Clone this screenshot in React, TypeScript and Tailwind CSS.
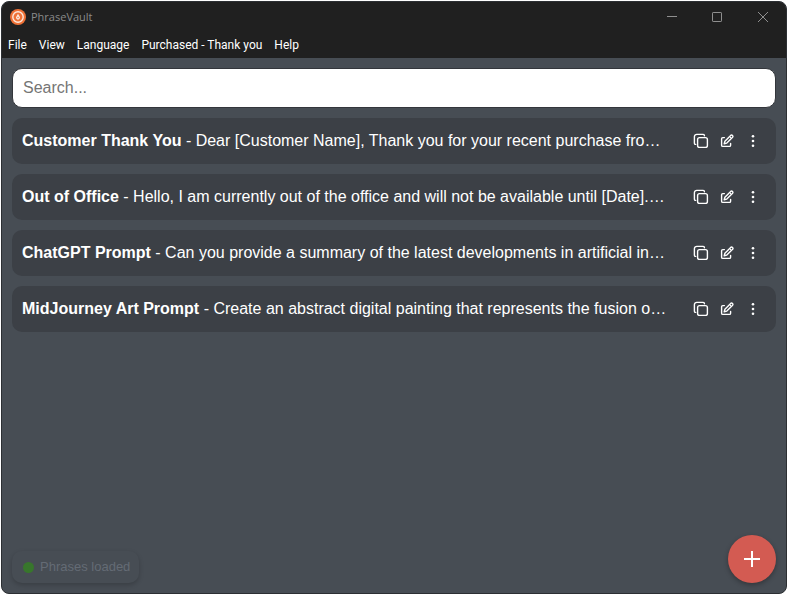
import { useState } from 'react';

interface Phrase {
  id: number;
  title: string;
  body: string;
}

const MENU_ITEMS = ['File', 'View', 'Language', 'Purchased - Thank you', 'Help'];

const PHRASES: Phrase[] = [
  { id: 1, title: 'Customer Thank You', body: 'Dear [Customer Name], Thank you for your recent purchase fro…' },
  { id: 2, title: 'Out of Office', body: 'Hello, I am currently out of the office and will not be available until [Date].…' },
  { id: 3, title: 'ChatGPT Prompt', body: 'Can you provide a summary of the latest developments in artificial in…' },
  { id: 4, title: 'MidJourney Art Prompt', body: 'Create an abstract digital painting that represents the fusion o…' },
];

const AppLogo = () => (
  <svg viewBox="0 0 16 16" className="size-4" aria-hidden="true">
    <circle cx="8" cy="8" r="8" fill="#ef7136" />
    <circle cx="8" cy="8" r="5.2" fill="none" stroke="#fbe9df" strokeWidth="1.4" />
    <path d="M8 4.8 9.5 7.2a2 2 0 1 1-3 0Z" fill="#fbe9df" />
    <circle cx="8" cy="8.5" r="0.7" fill="#ef7136" />
  </svg>
);

const CopyIcon = () => (
  <svg viewBox="0 0 16 16" className="size-4" fill="none" stroke="currentColor" aria-hidden="true">
    <rect x="4.6" y="4.6" width="9.8" height="9.8" rx="2" strokeWidth="1.4" />
    <path d="M11.4 2.7v-.1a1.2 1.2 0 0 0-1.2-1.2H3.8a2.4 2.4 0 0 0-2.4 2.4v6.4a1.2 1.2 0 0 0 1.2 1.2h.1" strokeWidth="1.4" strokeLinecap="round" />
  </svg>
);

const EditIcon = () => (
  <svg viewBox="0 0 16 16" className="size-4" fill="none" stroke="currentColor" strokeLinecap="round" strokeLinejoin="round" aria-hidden="true">
    <path d="M5.4 4.6H3.8A1.2 1.2 0 0 0 2.6 5.8v6.4a1.2 1.2 0 0 0 1.2 1.2h6.6a1.2 1.2 0 0 0 1.2-1.2v-1.8" strokeWidth="1.4" />
    <path d="m5.2 10.8.7-2.6 5.8-5.8a1.35 1.35 0 0 1 1.9 1.9l-5.8 5.8Z" strokeWidth="1.4" />
    <path d="m10.6 3.6 1.8 1.8" strokeWidth="1" />
  </svg>
);

const MoreIcon = () => (
  <svg viewBox="0 0 16 16" className="size-4" fill="currentColor" aria-hidden="true">
    <circle cx="8" cy="3.2" r="1.3" />
    <circle cx="8" cy="8" r="1.3" />
    <circle cx="8" cy="12.8" r="1.3" />
  </svg>
);

const TitleBar = () => (
  <header className="bg-[#202020] font-['Open_Sans','Noto_Sans',sans-serif]">
    <div className="flex h-[30px] items-center justify-between">
      <div className="flex items-center gap-[5px] pl-2 text-[11px] text-[#8a8a8a]">
        <AppLogo />
        <span>PhraseVault</span>
      </div>
      <div className="flex text-[#8f8f8f]">
        <button type="button" aria-label="Minimize" className="flex h-7 w-[45px] items-center justify-center">
          <svg viewBox="0 0 10 10" className="size-[10px]" stroke="currentColor"><path d="M0 4.5h10" /></svg>
        </button>
        <button type="button" aria-label="Maximize" className="flex h-7 w-[45px] items-center justify-center">
          <svg viewBox="0 0 10 10" className="size-[10px]" fill="none" stroke="currentColor"><rect x=".5" y=".5" width="9" height="9" rx=".6" /></svg>
        </button>
        <button type="button" aria-label="Close" className="flex h-7 w-[47px] items-center justify-center">
          <svg viewBox="0 0 10 10" className="size-[10px]" stroke="currentColor"><path d="m0 0 10 10M10 0 0 10" /></svg>
        </button>
      </div>
    </div>
    <nav className="flex h-[26px] items-center gap-3 px-[6px] font-[Roboto,'Open_Sans',sans-serif] text-xs text-white">
      {MENU_ITEMS.map((item) => (
        <button key={item} type="button">{item}</button>
      ))}
    </nav>
  </header>
);

const PhraseRow = ({ phrase }: { phrase: Phrase }) => (
  <li className="flex h-[46px] items-center justify-between rounded-[10px] bg-[#3c4046] px-[10px] text-white">
    <p className="min-w-0 truncate text-base">
      <b>{phrase.title}</b> - {phrase.body}
    </p>
    <div className="flex shrink-0 gap-[10px] pr-[5px] pl-4">
      <button type="button" aria-label={`Copy ${phrase.title}`}><CopyIcon /></button>
      <button type="button" aria-label={`Edit ${phrase.title}`}><EditIcon /></button>
      <button type="button" aria-label={`More options for ${phrase.title}`}><MoreIcon /></button>
    </div>
  </li>
);

export default function App() {
  const [query, setQuery] = useState('');
  const visible = PHRASES.filter((p) => `${p.title} ${p.body}`.toLowerCase().includes(query.toLowerCase()));

  return (
    <div className="flex min-h-screen bg-white px-px pt-px pb-[2px] font-['Liberation_Sans',Arial,sans-serif]">
      <div className="flex min-w-0 flex-1 flex-col overflow-hidden rounded-lg border border-[#2c2f33] bg-[#474d54]">
        <TitleBar />

        <main className="flex flex-1 flex-col px-[10px] pt-[10px]">
          <input
            type="text"
            aria-label="Search phrases"
            placeholder="Search..."
            value={query}
            onChange={(e) => setQuery(e.target.value)}
            className="h-10 w-full rounded-[10px] border border-[#33363b] bg-white px-[10px] text-base text-[#222222] outline-none placeholder:text-[#757575]"
          />
          <ul className="mt-[10px] flex flex-col gap-[10px]">
            {visible.map((phrase) => (
              <PhraseRow key={phrase.id} phrase={phrase} />
            ))}
          </ul>
        </main>

        <footer className="flex items-end justify-between px-[10px] pb-[10px]">
          <div role="status" className="flex h-8 items-center gap-[6px] rounded-[10px] pr-[9px] pl-[11px] text-[13px] text-[#646b74] shadow-[0_2px_5px_rgba(0,0,0,0.2)]">
            <span className="size-[11px] rounded-full bg-[#38762c]" />
            Phrases loaded
          </div>
          <button type="button" aria-label="Add phrase" className="flex size-12 items-center justify-center rounded-full bg-[#d35b52] text-white shadow-[0_2px_5px_rgba(0,0,0,0.3)]">
            <svg viewBox="0 0 16 16" className="size-4" stroke="currentColor" strokeWidth="2" aria-hidden="true"><path d="M8 0v16M0 8h16" /></svg>
          </button>
        </footer>
      </div>
    </div>
  );
}
